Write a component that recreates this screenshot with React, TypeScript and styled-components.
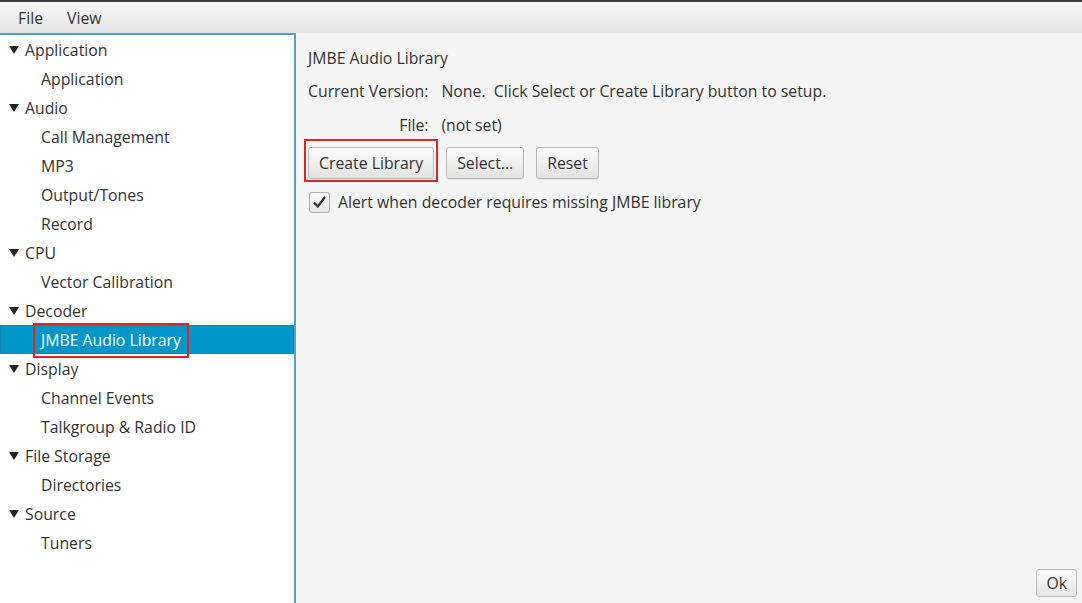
import React from "react";
import styled, { createGlobalStyle } from "styled-components";

const Global = createGlobalStyle`
  html, body { margin: 0; padding: 0; }
  body {
    font-family: "Open Sans", "Noto Sans", sans-serif;
    font-size: 15.8px;
    color: #333;
    background: #f4f4f4;
  }
`;

const Window = styled.div`
  width: 1082px;
  height: 603px;
  display: flex;
  flex-direction: column;
  overflow: hidden;
  background: #f4f4f4;
`;

const MenuBar = styled.div`
  height: 30px;
  padding-top: 1px;
  border-top: 2px solid #3a3a3a;
  background: linear-gradient(#f7f7f7, #e4e4e4);
  display: flex;
  align-items: center;
  padding-left: 18px;
  gap: 24px;
  flex-shrink: 0;
`;

const MenuItem = styled.span`
  color: #333;
`;

const Body = styled.div`
  flex: 1;
  display: flex;
  min-height: 0;
`;

const Tree = styled.div`
  width: 294px;
  background: #fff;
  border-top: 2px solid #4aa3d6;
  border-right: 2px solid #4aa3d6;
  display: flex;
  flex-direction: column;
  flex-shrink: 0;
`;

const Row = styled.div<{ $child?: boolean; $selected?: boolean }>`
  height: 29px;
  display: flex;
  align-items: center;
  padding-left: ${(p) => (p.$child ? "33px" : "9px")};
  background: ${(p) => (p.$selected ? "#0096c9" : "transparent")};
  color: ${(p) => (p.$selected ? "#fff" : "#333")};
  box-shadow: ${(p) => (p.$selected ? "inset 0 0 0 1px #1585b0" : "none")};
`;

const Arrow = styled.span`
  width: 0;
  height: 0;
  border-left: 5px solid transparent;
  border-right: 5px solid transparent;
  border-top: 8px solid #222;
  margin-right: 6px;
  margin-top: 1px;
`;

const Label = styled.span<{ $marked?: boolean }>`
  position: relative;
  padding: 0 8px;
  &::after {
    content: "";
    display: ${(p) => (p.$marked ? "block" : "none")};
    position: absolute;
    left: 0;
    top: -6px;
    right: 0;
    bottom: -7px;
    border: 2px solid #d9262c;
  }
`;

const Content = styled.div`
  flex: 1;
  display: flex;
  flex-direction: column;
  padding: 12px 0 0 12px;
  position: relative;
`;

const Title = styled.div`
  height: 25px;
  display: flex;
  align-items: center;
`;

const Form = styled.div`
  display: grid;
  grid-template-columns: auto auto;
  justify-content: start;
  column-gap: 13px;
  row-gap: 9px;
  margin-top: 9px;
`;

const FormLabel = styled.span`
  text-align: right;
  line-height: 25px;
`;

const FormValue = styled.span`
  line-height: 25px;
`;

const Buttons = styled.div`
  display: flex;
  gap: 12px;
  margin-top: 9px;
`;

const Button = styled.button<{ $marked?: boolean }>`
  position: relative;
  height: 32px;
  padding: 0 10px;
  font-family: inherit;
  font-size: inherit;
  color: #333;
  border: 1px solid #b8b8b8;
  border-radius: 3px;
  background: linear-gradient(#fbfbfb, #e2e2e2);
  box-shadow: 0 1px 0 rgba(0, 0, 0, 0.06);
  &::after {
    content: "";
    display: ${(p) => (p.$marked ? "block" : "none")};
    position: absolute;
    left: -5px;
    right: -5px;
    top: -9px;
    bottom: -4px;
    border: 2px solid #d9262c;
  }
`;

const CheckRow = styled.label`
  display: flex;
  align-items: center;
  gap: 8px;
  margin-top: 12px;
  padding-left: 1px;
`;

const CheckBox = styled.span`
  width: 19px;
  height: 19px;
  border: 1px solid #b0b0b0;
  border-radius: 3px;
  background: linear-gradient(#fafafa, #e6e6e6);
  display: flex;
  align-items: center;
  justify-content: center;
`;

const Footer = styled.div`
  position: absolute;
  right: 5px;
  bottom: 6px;
`;

const OkButton = styled.button`
  height: 28px;
  padding: 0 9px;
  font-family: inherit;
  font-size: inherit;
  color: #333;
  border: 1px solid #bcbcbc;
  border-radius: 3px;
  background: linear-gradient(#fbfbfb, #e4e4e4);
`;

type Node = { label: string; children: string[] };

const nodes: Node[] = [
  { label: "Application", children: ["Application"] },
  { label: "Audio", children: ["Call Management", "MP3", "Output/Tones", "Record"] },
  { label: "CPU", children: ["Vector Calibration"] },
  { label: "Decoder", children: ["JMBE Audio Library"] },
  { label: "Display", children: ["Channel Events", "Talkgroup & Radio ID"] },
  { label: "File Storage", children: ["Directories"] },
  { label: "Source", children: ["Tuners"] },
];

const selected = "JMBE Audio Library";

export default function App() {
  return (
    <Window>
      <Global />
      <MenuBar>
        <MenuItem>File</MenuItem>
        <MenuItem>View</MenuItem>
      </MenuBar>
      <Body>
        <Tree>
          {nodes.map((n) => (
            <React.Fragment key={n.label}>
              <Row>
                <Arrow />
                <span>{n.label}</span>
              </Row>
              {n.children.map((c) => (
                <Row key={c} $child $selected={c === selected}>
                  <Label $marked={c === selected}>{c}</Label>
                </Row>
              ))}
            </React.Fragment>
          ))}
        </Tree>
        <Content>
          <Title>JMBE Audio Library</Title>
          <Form>
            <FormLabel>Current Version:</FormLabel>
            <FormValue>None.&nbsp; Click Select or Create Library button to setup.</FormValue>
            <FormLabel>File:</FormLabel>
            <FormValue>(not set)</FormValue>
          </Form>
          <Buttons>
            <Button $marked>Create Library</Button>
            <Button>Select...</Button>
            <Button>Reset</Button>
          </Buttons>
          <CheckRow>
            <CheckBox>
              <svg width="15" height="14" viewBox="0 0 15 14">
                <path d="M2 7.5 L5.8 11.5 L13 2" fill="none" stroke="#333" strokeWidth="2.2" strokeLinejoin="miter" />
              </svg>
            </CheckBox>
            <span>Alert when decoder requires missing JMBE library</span>
          </CheckRow>
          <Footer>
            <OkButton>Ok</OkButton>
          </Footer>
        </Content>
      </Body>
    </Window>
  );
}
